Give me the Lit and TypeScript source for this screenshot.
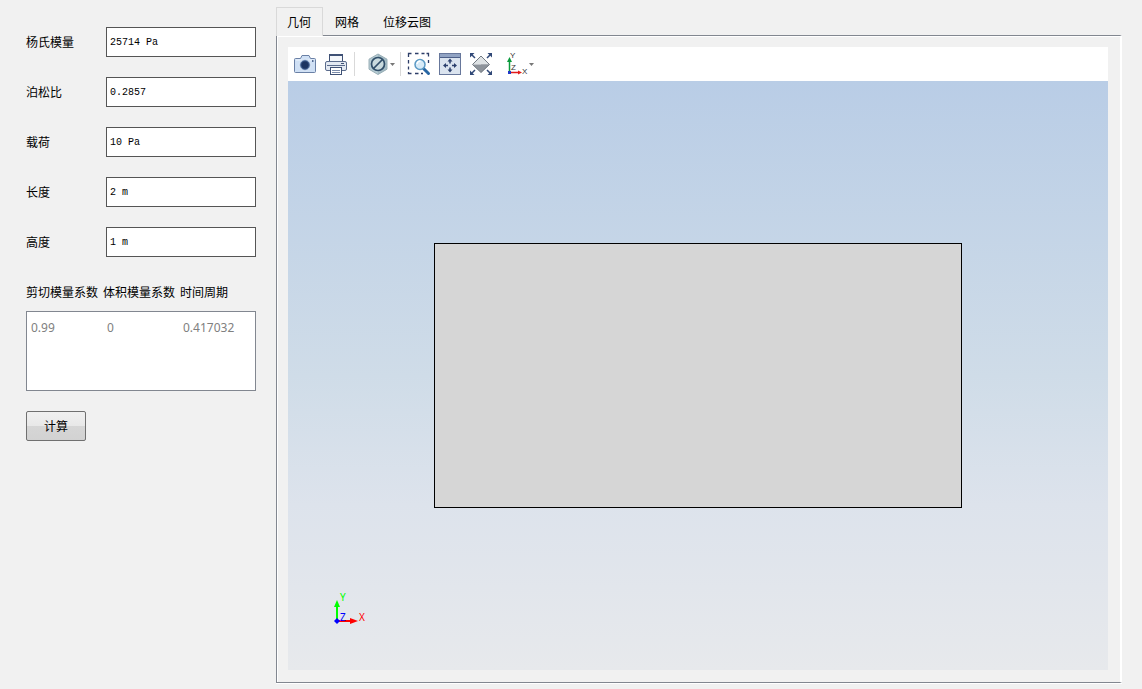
import { LitElement, html, css, svg } from "lit";
import { customElement, property, state } from "lit/decorators.js";

type Field = { id: string; label: string; value: string };

const FIELDS: Field[] = [
  { id: "young", label: "杨氏模量", value: "25714 Pa" },
  { id: "poisson", label: "泊松比", value: "0.2857" },
  { id: "load", label: "载荷", value: "10 Pa" },
  { id: "length", label: "长度", value: "2 m" },
  { id: "height", label: "高度", value: "1 m" },
];

const TABS = ["几何", "网格", "位移云图"];

const ICONS = {
  camera: svg`
    <path d="M2.5 6.5h5l1.5-3h7l1.5 3h4q1 0 1 1v12q0 1-1 1h-19q-1 0-1-1v-12q0-1 1-1z" fill="#cfe0f5" stroke="#6a80a5"/>
    <path d="M3 8h18" stroke="#eef5fd"/>
    <circle cx="12" cy="13" r="6" fill="#a9bfdd" stroke="#dce8f7"/>
    <circle cx="12" cy="13" r="4.2" fill="#1d3562" stroke="#3e5c8e"/>
    <path d="M19 9h1.500" stroke="#2c4674" stroke-width="1.500"/>`,
  printer: svg`
    <rect x="5.500" y="2.500" width="13" height="7" fill="#f4f7fb" stroke="#3f5175"/>
    <path d="M5 3h14" stroke="#3f5175" stroke-width="2"/>
    <rect x="1.500" y="9.500" width="21" height="9" rx="1.500" fill="#e3e9f2" stroke="#5b6c8d"/>
    <path d="M3 13.500h18" stroke="#5b6c8d"/>
    <path d="M17 11.500h3" stroke="#3f5175"/>
    <rect x="6.500" y="15.500" width="11" height="7" fill="#fff" stroke="#3f5175"/>
    <path d="M8 18.500h8M8 20.500h8" stroke="#7b8cab"/>`,
  noEntry: svg`
    <path d="M12 2l9 5.200v10L12 22.500l-9-5.300v-10z" fill="#b5cbd3" stroke="#9bb0b8"/>
    <path d="M12 2l9 5.200v10l-9 5.300z" fill="#93abb5" opacity=".5"/>
    <circle cx="12" cy="12" r="6.500" fill="#c9dade" stroke="#304e69" stroke-width="1.700"/>
    <path d="M7.500 16.500l9-9" stroke="#304e69" stroke-width="1.700"/>
    <path d="M24 11h5l-2.500 3z" fill="#777"/>`,
  zoomArea: svg`
    <path d="M1.500 5v-3.500h3M8 1.500h3.500M14.500 1.500h3M19.500 1.500h2v3M21.500 8v3M1.500 8v3.500M1.500 14.500v3M1.500 20v1.500h3M8 21.500h3.500M14 21.500h2" fill="none" stroke="#2d3d68" stroke-width="1.300"/>
    <path d="M16.500 16.500l5 5" stroke="#2867a4" stroke-width="3" stroke-linecap="round"/>
    <circle cx="13" cy="12.500" r="5" fill="#d7ebf8" stroke="#5b9ac5" stroke-width="1.500"/>
    <path d="M10 12q.5-3 3.500-3" fill="none" stroke="#fff" stroke-width="1.300"/>`,
  fitWindow: svg`
    <rect x="1.500" y="1.500" width="21" height="21" fill="#dbe4ef" stroke="#67779b"/>
    <rect x="2" y="2" width="20" height="3" fill="#91a3c3"/>
    <path d="M2 5.500h20" stroke="#4d5f88"/>
    <path d="M12 6.500l2.500 3h-5zM12 20.500l2.500-3h-5zM5 13.500l3-2.500v5zM19 13.500l-3-2.500v5z" fill="#2d406d"/>
    <path d="M12 9v2.500M12 15.500v2.500M7.500 13.500h2.500M14 13.500h2.500" stroke="#2d406d" stroke-width="1.500"/>`,
  fitBody: svg`
    <path d="M12 4l8.500 8.500-8.500 8z" fill="#999ea4"/>
    <path d="M12 4l-8.500 8.500h17z" fill="#dfe3e5"/>
    <path d="M3.500 12.500l8.500 8 8.500-8z" fill="#8e949b"/>
    <path d="M12 4l8.500 8.500-8.500 8-8.500-8z" fill="none" stroke="#737b83"/>
    <path d="M1 1h4.500l-4.500 4.500zM23 1h-4.500l4.500 4.500zM1 23h4.500l-4.500-4.500zM23 23h-4.500l4.500-4.500z" fill="#304877"/>
    <path d="M3 3l3 3M21 3l-3 3M3 21l3-3M21 21l-3-3" stroke="#304877" stroke-width="1.500"/>`,
  axes: svg`
    <path d="M2.500 20v-12" stroke="#0a9a3c" stroke-width="1.500"/>
    <path d="M2.500 5l2.500 5h-5z" fill="#0a9a3c"/>
    <path d="M3 20.500h8" stroke="#e21b1b" stroke-width="1.500"/>
    <path d="M15 20.500l-4-2v4z" fill="#e21b1b"/>
    <rect x="1" y="19" width="3" height="3" fill="#2038c8"/>
    <g fill="#333" font-size="8"><text x="3" y="6">Y</text><text x="4" y="18">Z</text><text x="15" y="22">X</text></g>
    <path d="M22 11h5l-2.500 3z" fill="#777"/>`,
};

@customElement("tool-button")
class ToolButton extends LitElement {
  @property() label = "";
  @property() icon: keyof typeof ICONS = "camera";
  @property({ type: Number }) size = 24;

  static styles = css`
    :host { display: flex; }
    button { display: flex; padding: 0; border: 0; background: none; cursor: pointer; }
    svg { display: block; font-family: "Liberation Sans", sans-serif; }
  `;

  render() {
    return html`<button type="button" aria-label=${this.label}>
      <svg width=${this.size} height="24" viewBox="0 0 ${this.size} 24">${ICONS[this.icon]}</svg>
    </button>`;
  }
}

@customElement("geometry-view")
class GeometryView extends LitElement {
  static styles = css`
    :host { display: flex; flex-direction: column; min-width: 0; font-family: "Noto Sans", sans-serif; }
    .toolbar { display: flex; align-items: center; height: 34px; padding-left: 5px; background: #fff; }
    .group { display: flex; gap: 7px; }
    .output { padding-right: 6px; border-right: 1px solid #d9d9d9; }
    .display { padding: 0 4px 0 11px; border-right: 1px solid #d9d9d9; }
    .fit { padding-left: 6px; }
    .orient { padding-left: 14px; }
    .canvas {
      position: relative; flex: 1; min-height: 200px;
      display: flex; align-items: center; justify-content: center;
      background: linear-gradient(#b9cde6, #cfdce8 50%, #dde3ec 72%, #e7e9ec);
    }
    .plate {
      box-sizing: border-box; width: 64.4%; aspect-ratio: 2 / 1;
      border: 1px solid #000; background: #d6d6d6;
    }
    .triad { position: absolute; left: 44px; bottom: 40px; font-size: 10px; }
  `;

  render() {
    return html`
      <div class="toolbar" role="toolbar" aria-label="视图">
        <div class="group output">
          <tool-button icon="camera" label="截图"></tool-button>
          <tool-button icon="printer" label="打印"></tool-button>
        </div>
        <div class="group display">
          <tool-button icon="noEntry" label="透明度" size="30"></tool-button>
        </div>
        <div class="group fit">
          <tool-button icon="zoomArea" label="框选缩放"></tool-button>
          <tool-button icon="fitWindow" label="适合窗口"></tool-button>
          <tool-button icon="fitBody" label="缩放到范围"></tool-button>
        </div>
        <div class="group orient">
          <tool-button icon="axes" label="视图方向" size="28"></tool-button>
        </div>
      </div>
      <div class="canvas">
        <div class="plate"></div>
        <svg class="triad" width="36" height="40" viewBox="0 0 36 40">
          <path d="M5 30v-15" stroke="#0f0" stroke-width="2" />
          <path d="M5 10l3 7h-6z" fill="#0f0" />
          <path d="M5 31h14" stroke="#f00" stroke-width="2" />
          <path d="M26 31l-8-3v6z" fill="#f00" />
          <path d="M5 28l3 3-3 3-3-3z" fill="#00f" />
          <text x="8" y="11" fill="#0f0">Y</text>
          <text x="8" y="31" fill="#00f">Z</text>
          <text x="27" y="31" fill="#f00">X</text>
        </svg>
      </div>
    `;
  }
}

@customElement("app-root")
class AppRoot extends LitElement {
  @state() private active = 0;

  static styles = css`
    :host {
      display: flex; box-sizing: border-box; min-height: 100vh;
      background: #f1f1f1; color: #000;
      font: 12px/20px "Noto Sans CJK SC", sans-serif;
    }
    .form {
      box-sizing: border-box; flex: none; width: 276px; padding: 27px 20px 20px 26px;
      display: flex; flex-direction: column; gap: 20px;
    }
    .row { display: grid; grid-template-columns: 80px 1fr; align-items: center; }
    .field {
      box-sizing: border-box; width: 100%; height: 30px; padding: 0 3px;
      border: 1px solid #555; border-radius: 0; background: #fff; color: #000;
      font: 10px "Liberation Mono", monospace;
    }
    .results { display: flex; flex-direction: column; gap: 4px; }
    .headings { display: grid; grid-template-columns: 77px 77px 1fr; align-items: center; height: 30px; white-space: nowrap; }
    .output {
      box-sizing: border-box; width: 100%; height: 80px; margin: 0; padding: 6px 4px;
      border: 1px solid #828790; border-radius: 0; background: #fff; color: #808080;
      font: 12px/20px "Noto Sans", sans-serif; white-space: pre; tab-size: 76px;
      resize: none; overflow: hidden;
    }
    .compute {
      align-self: flex-start; width: 60px; height: 30px; padding: 0;
      border: 1px solid #707070; border-radius: 2px; color: #000;
      background: linear-gradient(#f0f0f0, #e8e8e8 50%, #d6d6d6 50%, #d2d2d2);
      font: inherit;
    }
    .main { flex: 1; min-width: 0; padding: 7px 20px 6px 0; display: flex; flex-direction: column; }
    .tabs { display: flex; height: 29px; margin-bottom: -1px; }
    .tab { padding: 0 12px; border: 0; background: none; color: inherit; font: inherit; }
    .tab[aria-selected="true"] {
      z-index: 1; padding: 0 11px 0 10px; border: 1px solid #d9d9d9; border-bottom: 0; background: #f1f1f1;
    }
    .panel {
      flex: 1; display: flex; flex-direction: column; padding: 11px 12px 12px 11px;
      border: 1px solid #828790; border-right: 2px solid #fff;
      box-shadow: inset 1px 1px #fff, 0 1px #fff;
    }
    .view { flex: 1; }
  `;

  render() {
    return html`
      <form class="form" @submit=${(e: Event) => e.preventDefault()}>
        ${FIELDS.map(
          (f) => html`<div class="row">
            <label for=${f.id}>${f.label}</label>
            <input class="field" id=${f.id} type="text" .value=${f.value} />
          </div>`
        )}
        <div class="results">
          <label class="headings" for="results">
            <span>剪切模量系数</span><span>体积模量系数</span><span>时间周期</span>
          </label>
          <textarea class="output" id="results" readonly .value=${"0.99\t0\t0.417032"}></textarea>
        </div>
        <button class="compute" type="submit">计算</button>
      </form>
      <main class="main">
        <div class="tabs" role="tablist">
          ${TABS.map(
            (t, i) => html`<button
              class="tab" type="button" role="tab" aria-selected=${this.active === i ? "true" : "false"}
              @click=${() => (this.active = i)}
            >${t}</button>`
          )}
        </div>
        <section class="panel" role="tabpanel" aria-label=${TABS[this.active]}>
          <geometry-view class="view"></geometry-view>
        </section>
      </main>
    `;
  }
}
